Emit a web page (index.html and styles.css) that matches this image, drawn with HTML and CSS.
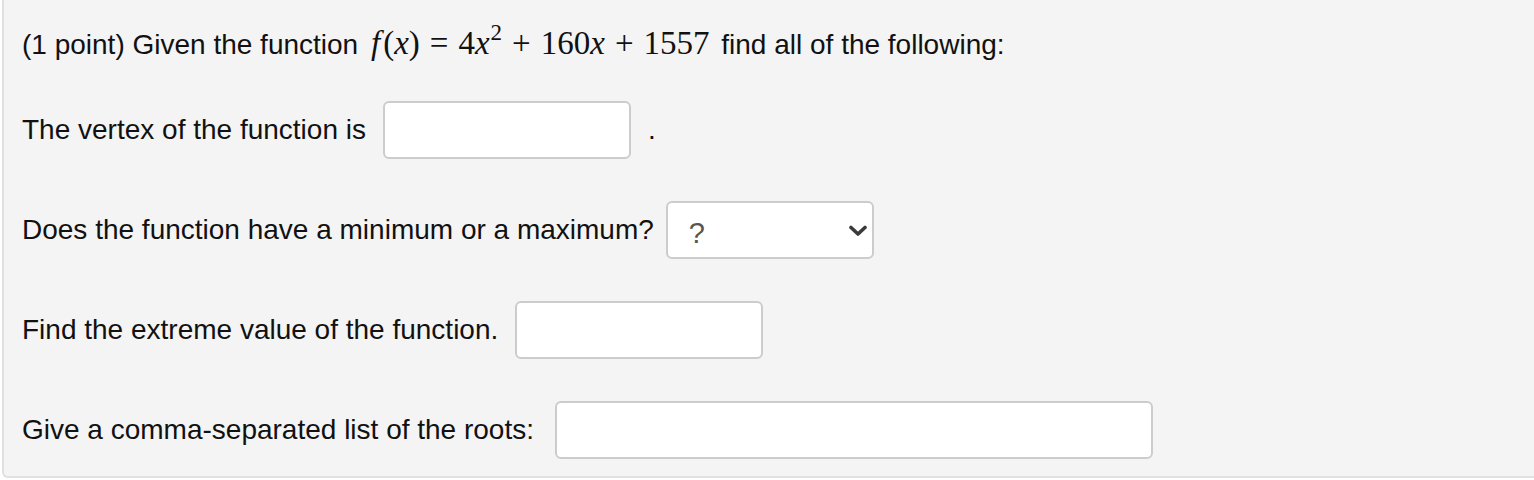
FILE: index.html
```html
<!DOCTYPE html>
<html>
<head>
    <title>Quadratic function problem</title>
    <link rel="stylesheet" href="styles.css">
</head>
<body>
    <div class="problem">
        <!-- Question statement -->
        <p class="intro">(1 point) Given the function <span class="math"><i class="fn">f</i>(<i>x</i>)<span class="op">=</span>4<i>x</i><sup>2</sup><span class="op">+</span>160<i>x</i><span class="op">+</span>1557</span> find all of the following:</p>

        <div class="row">
            <label for="vertex">The vertex of the function is</label>
            <input type="text" id="vertex" class="answer">
            <span class="dot">.</span>
        </div>

        <div class="row">
            <label for="kind">Does the function have a minimum or a maximum?</label>
            <div class="select-wrap">
                <select id="kind" class="answer-select">
                    <option>?</option>
                    <option>Minimum</option>
                    <option>Maximum</option>
                </select>
                <svg class="chevron" viewBox="0 0 20 12" width="20" height="12">
                    <path d="M3 2.5 L10 9 L17 2.5" fill="none" stroke="#3a3a3a" stroke-width="3.6" stroke-linecap="round" stroke-linejoin="round"/>
                </svg>
            </div>
        </div>

        <div class="row">
            <label for="extreme">Find the extreme value of the function.</label>
            <input type="text" id="extreme" class="answer">
        </div>

        <div class="row">
            <label for="roots">Give a comma-separated list of the roots:</label>
            <input type="text" id="roots" class="answer wide">
        </div>
    </div>
</body>
</html>
```

FILE: styles.css
```css
body {
    margin: 0;
    font-family: "Liberation Sans", Arial, sans-serif;
    font-size: 28px;
    color: #111;
    background: #fff;
}
.problem {
    background: #f4f4f4;
    border: 2px solid #e0e0e0;
    border-top: none;
    border-right: none;
    border-radius: 0 0 0 6px;
    margin-left: 2px;
    height: 478px;
    box-sizing: border-box;
    padding: 22px 0 0 18px;
}
.intro {
    margin: 0;
    height: 42px;
    line-height: 42px;
}
.math {
    font-family: "Liberation Serif", "Times New Roman", serif;
    font-size: 33px;
    margin-left: 5px;
    margin-right: 4px;
}
.math .fn {
    margin-right: 3px;
}
.math sup {
    font-size: 23px;
    vertical-align: 14px;
    line-height: 0;
    margin-left: 1px;
}
.math .op {
    margin: 0 10px;
}
.row {
    display: flex;
    align-items: center;
    gap: 17px;
    height: 58px;
    margin-top: 42px;
}
.intro + .row {
    margin-top: 37px;
}
.answer {
    width: 248px;
    height: 58px;
    box-sizing: border-box;
    border: 2px solid #cccccc;
    border-radius: 6px;
    background: #fff;
    font-size: 24px;
    padding: 0 10px;
    margin: 0;
}
.answer.wide {
    width: 598px;
    margin-left: 4px;
}
.select-wrap {
    position: relative;
    margin-left: -5px;
}
.answer-select {
    appearance: none;
    -webkit-appearance: none;
    width: 208px;
    height: 58px;
    box-sizing: border-box;
    border: 2px solid #cccccc;
    border-radius: 6px;
    background: #fff;
    font-family: "Liberation Sans", Arial, sans-serif;
    font-size: 29px;
    color: #555;
    padding: 5px 20px 0 21px;
    margin: 0;
}
.chevron {
    position: absolute;
    right: 6px;
    top: 24px;
    pointer-events: none;
}
```
